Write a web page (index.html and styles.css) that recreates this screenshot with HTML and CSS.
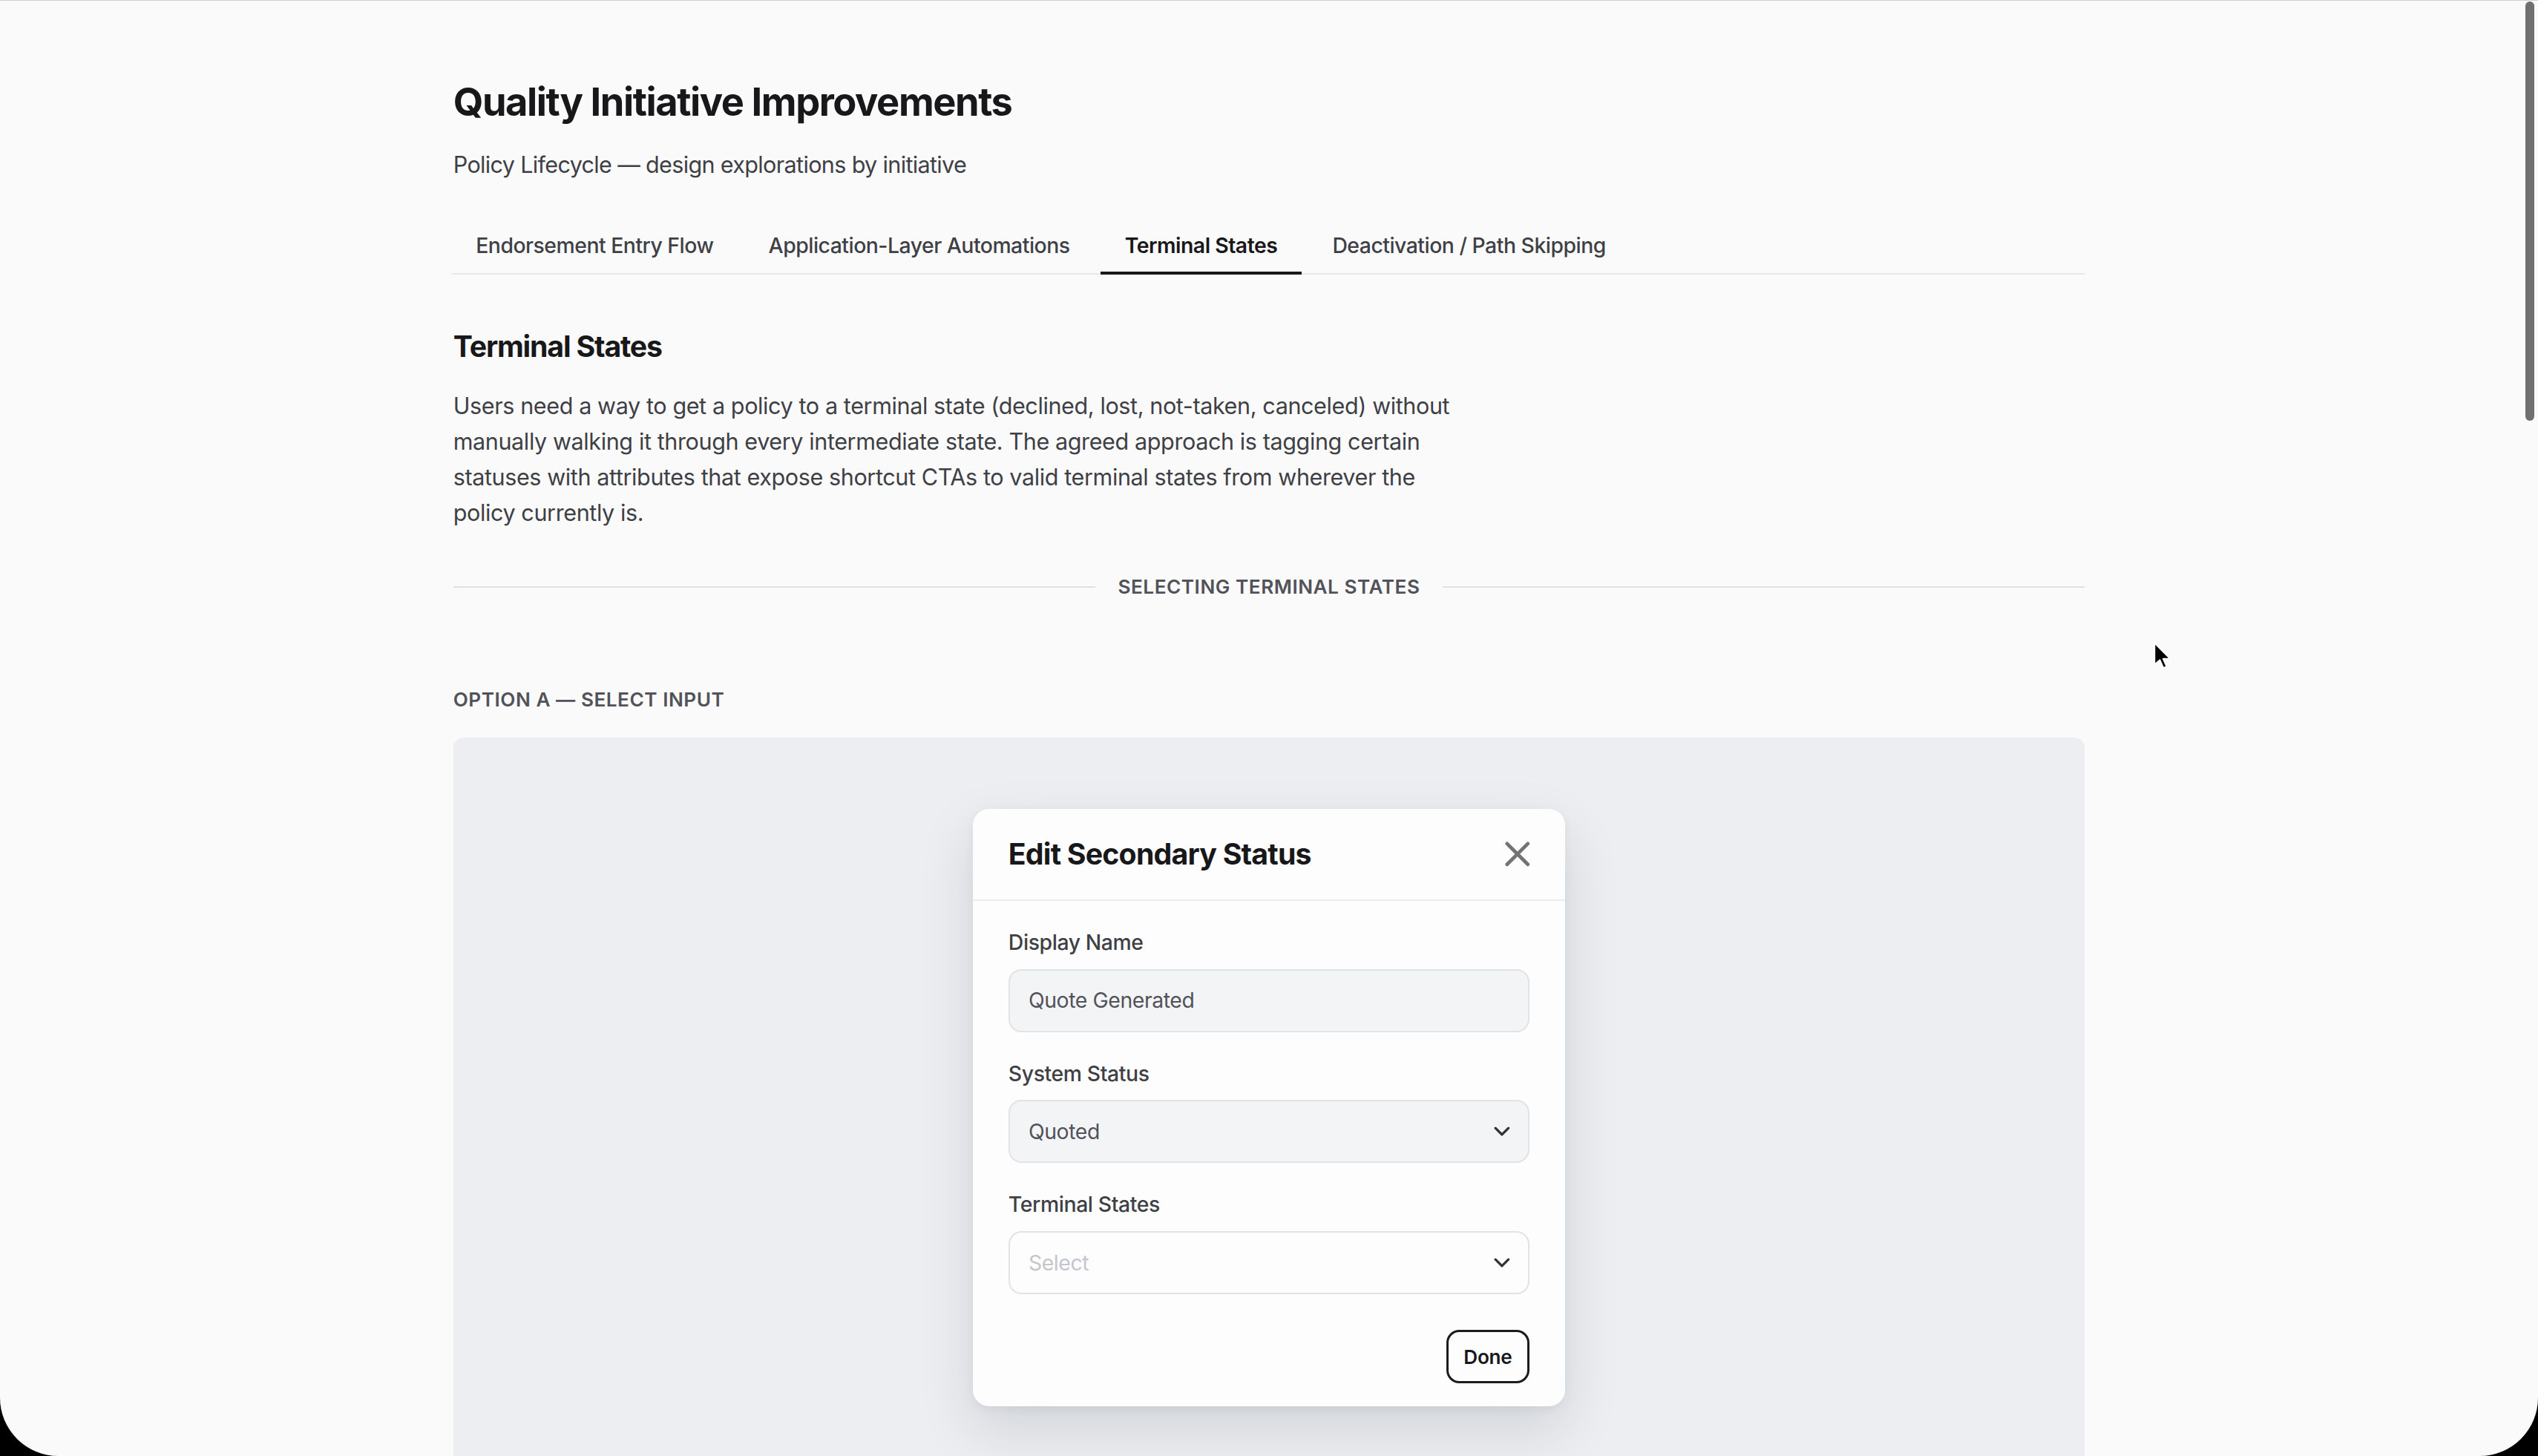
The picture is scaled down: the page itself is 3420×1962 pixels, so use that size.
FILE: index.html
```html
<!DOCTYPE html>
<html lang="en">
<head>
<meta charset="utf-8">
<title>Quality Initiative Improvements</title>
<link rel="stylesheet" href="styles.css">
</head>
<body>
<div class="frame">
  <main class="page">
    <header class="page-head">
      <h1 class="title">Quality Initiative Improvements</h1>
      <p class="subtitle">Policy Lifecycle — design explorations by initiative</p>
    </header>

    <nav class="tabs">
      <button class="tab">Endorsement Entry Flow</button>
      <button class="tab">Application-Layer Automations</button>
      <button class="tab active">Terminal States</button>
      <button class="tab">Deactivation / Path Skipping</button>
    </nav>

    <section class="section">
      <h2 class="section-title">Terminal States</h2>
      <p class="lead">Users need a way to get a policy to a terminal state (declined, lost, not-taken, canceled) without manually walking it through every intermediate state. The agreed approach is tagging certain statuses with attributes that expose shortcut CTAs to valid terminal states from wherever the policy currently is.</p>

      <div class="divider"><span>Selecting terminal states</span></div>

      <div class="option">
        <h3 class="option-label">Option A — Select input</h3>
        <div class="stage">
          <div class="modal">
            <div class="modal-head">
              <h4 class="modal-title">Edit Secondary Status</h4>
              <button class="close" aria-label="Close">
                <svg viewBox="0 0 20 20" width="20" height="20"><path d="M3.6 3.6L16.4 16.4M16.4 3.6L3.6 16.4" fill="none" stroke="#737373" stroke-width="2.2" stroke-linecap="round"/></svg>
              </button>
            </div>
            <div class="modal-body">
              <div class="field">
                <span class="field-label">Display Name</span>
                <div class="control">Quote Generated</div>
              </div>
              <div class="field">
                <span class="field-label">System Status</span>
                <div class="control">
                  <span>Quoted</span>
                  <svg class="chev" viewBox="0 0 10 6" width="10" height="6"><path d="M1 1l4 4 4-4" fill="none" stroke="#333" stroke-width="1.5" stroke-linecap="round" stroke-linejoin="round"/></svg>
                </div>
              </div>
              <div class="field">
                <span class="field-label">Terminal States</span>
                <div class="control empty">
                  <span class="placeholder">Select</span>
                  <svg class="chev" viewBox="0 0 10 6" width="10" height="6"><path d="M1 1l4 4 4-4" fill="none" stroke="#333" stroke-width="1.5" stroke-linecap="round" stroke-linejoin="round"/></svg>
                </div>
              </div>
              <div class="modal-foot">
                <button class="btn">Done</button>
              </div>
            </div>
          </div>
        </div>
      </div>
    </section>
  </main>

  <div class="scroll-thumb"></div>
  <svg class="cursor" viewBox="0 0 12 18" width="12" height="18"><path d="M1 1L1 14.6L4.3 11.7L6.5 16.6L8.6 15.7L6.4 10.9L10.8 10.9Z" fill="#000" stroke="#fff" stroke-width="1" stroke-linejoin="round"/></svg>
</div>
</body>
</html>
```

FILE: styles.css
```css
html {
  zoom: 2.1811;
  background: #000;
}

body {
  margin: 0;
  font-family: Inter, "Liberation Sans", sans-serif;
  color: #18181b;
  letter-spacing: -0.011em;
  -webkit-font-smoothing: antialiased;
}

.frame {
  position: relative;
  height: 899.5px;
  overflow: hidden;
  background: #fafafa;
  border-radius: 0 0 36px 36px;
  box-shadow: inset 0 0.5px 0 #cfcfcf;
}

.page {
  width: 1008px;
  margin: 0 auto;
  padding-top: 47px;
}

.title {
  margin: 0;
  font-size: 24px;
  line-height: 32px;
  font-weight: 700;
  letter-spacing: -0.027em;
  color: #18181b;
}

.subtitle {
  margin: 12.5px 0 0;
  font-size: 14px;
  line-height: 20px;
  letter-spacing: -0.021em;
  color: #3f3f46;
}

.tabs {
  display: flex;
  gap: 4px;
  margin: 18.5px 0 0 -1px;
  border-bottom: 1px solid #e7e7ea;
}

.tab {
  padding: 12px 15px 6px;
  margin: 0 0 -1px;
  border: 0;
  border-bottom: 2px solid transparent;
  background: none;
  font-family: inherit;
  font-size: 13px;
  line-height: 20px;
  font-weight: 500;
  letter-spacing: -0.017em;
  color: #3f3f46;
  cursor: pointer;
}

.tab.active {
  color: #18181b;
  font-weight: 600;
  border-bottom-color: #18181b;
}

.section-title {
  margin: 30px 0 0;
  font-size: 18px;
  line-height: 28px;
  font-weight: 700;
  letter-spacing: -0.03em;
}

.lead {
  margin: 12px 0 0;
  max-width: 625px;
  font-size: 14px;
  line-height: 22px;
  color: #3f3f46;
}

.divider {
  display: flex;
  align-items: center;
  gap: 14px;
  margin-top: 27px;
}

.divider::before,
.divider::after {
  content: "";
  flex: 1;
  height: 1px;
  background: #dfe1e6;
}

.divider span,
.option-label {
  font-size: 12px;
  line-height: 16px;
  font-weight: 600;
  letter-spacing: 0.02em;
  text-transform: uppercase;
  color: #52525b;
}

.option-label {
  margin: 54px 0 0;
}

.stage {
  margin-top: 15px;
  min-height: 520px;
  padding-top: 44px;
  display: flex;
  justify-content: center;
  align-items: flex-start;
  background: #eceef1;
  border-radius: 6px 6px 0 0;
}

.modal {
  width: 366px;
  background: #fdfdfd;
  border-radius: 10px;
  box-shadow: 0 14px 34px rgba(30, 41, 59, 0.13), 0 2px 6px rgba(0, 0, 0, 0.05);
}

.modal-head {
  display: flex;
  align-items: center;
  justify-content: space-between;
  padding: 14px 22px;
  border-bottom: 1px solid #ececef;
}

.modal-title {
  margin: 0;
  font-size: 18px;
  line-height: 28px;
  font-weight: 700;
  letter-spacing: -0.02em;
  color: #18181b;
}

.close {
  display: flex;
  width: 20px;
  height: 20px;
  margin-right: -2.5px;
  padding: 0;
  border: 0;
  background: none;
}

.modal-body {
  display: flex;
  flex-direction: column;
  gap: 17px;
  padding: 17px 22px 14px;
}

.field {
  display: flex;
  flex-direction: column;
  gap: 7px;
}

.field-label {
  font-size: 13px;
  line-height: 18px;
  font-weight: 500;
  color: #3f3f46;
}

.control {
  display: flex;
  align-items: center;
  justify-content: space-between;
  box-sizing: border-box;
  height: 39px;
  padding: 0 12px 0 11.5px;
  border: 1px solid #e2e3e6;
  border-radius: 8px;
  background: #f3f4f5;
  font-size: 13px;
  color: #52525b;
}

.control.empty {
  background: #fdfdfd;
}

.placeholder {
  color: #c3c6cc;
}

.chev {
  display: block;
  margin-right: -1px;
}

.modal-foot {
  display: flex;
  justify-content: flex-end;
  margin-top: 5px;
}

.btn {
  box-sizing: border-box;
  height: 33px;
  padding: 0 9.5px;
  border: 1.5px solid #1c1c1e;
  border-radius: 8px;
  background: transparent;
  font-family: inherit;
  font-size: 12px;
  font-weight: 600;
  letter-spacing: -0.011em;
  color: #18181b;
}

.scroll-thumb {
  position: absolute;
  top: 1px;
  right: 2.5px;
  width: 5.5px;
  height: 259px;
  border-radius: 3px;
  background: #6f6f6f;
}

.cursor {
  position: absolute;
  left: 1330px;
  top: 396px;
}
```
